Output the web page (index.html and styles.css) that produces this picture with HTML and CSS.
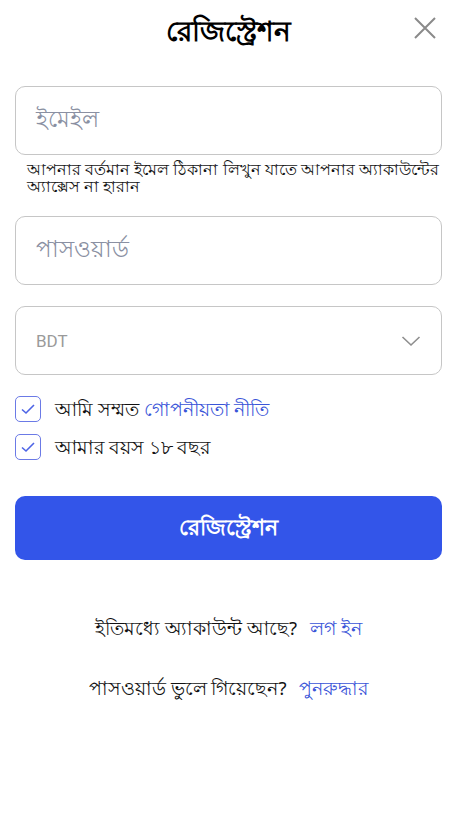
FILE: index.html
```html
<!DOCTYPE html>
<html lang="bn">
<head>
<meta charset="utf-8">
<title>রেজিস্ট্রেশন</title>
<link rel="stylesheet" href="styles.css">
</head>
<body>
<div class="page">
  <header class="header">
    <h1 class="title">রেজিস্ট্রেশন</h1>
    <button class="close" aria-label="close">
      <svg width="22" height="22" viewBox="0 0 22 22"><path d="M1 1L21 21M21 1L1 21" stroke="#8a8a8a" stroke-width="2" fill="none"/></svg>
    </button>
  </header>

  <form class="form">
    <div class="field">
      <div class="input"><span class="placeholder">ইমেইল</span></div>
      <p class="hint">আপনার বর্তমান ইমেল ঠিকানা লিখুন যাতে আপনার অ্যাকাউন্টের অ্যাক্সেস না হারান</p>
    </div>
    <div class="input"><span class="placeholder">পাসওয়ার্ড</span></div>
    <div class="input select">
      <span class="currency">BDT</span>
      <svg width="20" height="12" viewBox="0 0 20 12"><path d="M1.5 2L10 10L18.5 2" stroke="#8e8e8e" stroke-width="1.6" fill="none"/></svg>
    </div>

    <div class="checks">
      <label class="check">
        <span class="box"><svg width="16" height="12" viewBox="0 0 16 12"><path d="M2 6.5L6 10L14 2" stroke="#4d64e6" stroke-width="1.6" fill="none"/></svg></span>
        <span>আমি সম্মত <a class="link">গোপনীয়তা নীতি</a></span>
      </label>
      <label class="check">
        <span class="box"><svg width="16" height="12" viewBox="0 0 16 12"><path d="M2 6.5L6 10L14 2" stroke="#4d64e6" stroke-width="1.6" fill="none"/></svg></span>
        <span>আমার বয়স ১৮ বছর</span>
      </label>
    </div>

    <button type="button" class="submit">রেজিস্ট্রেশন</button>
  </form>

  <div class="footer">
    <p class="line">ইতিমধ্যে অ্যাকাউন্ট আছে? <a class="link">লগ ইন</a></p>
    <p class="line">পাসওয়ার্ড ভুলে গিয়েছেন? <a class="link">পুনরুদ্ধার</a></p>
  </div>
</div>
</body>
</html>
```

FILE: styles.css
```css
* { box-sizing: border-box; }
html, body { margin: 0; padding: 0; background: #fff; }
body {
  font-family: "Noto Sans", "Liberation Sans", sans-serif;
  color: #111;
}
.page {
  width: 455px;
  padding: 0 13px 0 15px;
}
.header {
  position: relative;
  height: 60px;
  display: flex;
  align-items: center;
  justify-content: center;
}
.title {
  margin: 0;
  font-size: 28px;
  line-height: 36px;
  font-weight: 700;
  color: #000;
}
.close {
  position: absolute;
  right: 6px;
  top: 17px;
  background: none;
  border: 0;
  padding: 0;
  display: flex;
}
.form {
  margin-top: 26px;
  display: flex;
  flex-direction: column;
  gap: 21px;
}
.input {
  height: 69px;
  border: 1px solid #c6c6c6;
  border-radius: 10px;
  display: flex;
  align-items: center;
  padding: 0 20px;
}
.placeholder {
  font-size: 23px;
  color: #8a90a2;
}
.hint {
  margin: 6px 0 0 12px;
  font-size: 16px;
  line-height: 17px;
  color: #111;
}
.select { justify-content: space-between; padding: 0 20px 0 20px; }
.currency {
  font-family: "Roboto", "Liberation Sans", sans-serif;
  font-size: 17px;
  color: #9a9a9a;
}
.checks {
  display: flex;
  flex-direction: column;
  gap: 12px;
}
.check {
  display: flex;
  align-items: center;
  gap: 14px;
  font-size: 18.5px;
  line-height: 26px;
  color: #111;
}
.box {
  width: 26px;
  height: 26px;
  border: 1.5px solid #6b7ae6;
  border-radius: 5px;
  display: flex;
  align-items: center;
  justify-content: center;
}
.link { color: #3a55d8; text-decoration: none; }
.submit {
  margin-top: 15px;
  height: 64px;
  border: 0;
  border-radius: 10px;
  background: #3355e9;
  color: #fff;
  font-family: inherit;
  font-size: 22px;
  font-weight: 700;
}
.footer {
  margin-top: 56px;
  display: flex;
  flex-direction: column;
  align-items: center;
  gap: 36px;
}
.line {
  margin: 0;
  font-size: 18.5px;
  line-height: 24px;
  color: #111;
}
.line .link { margin-left: 8px; }
```
